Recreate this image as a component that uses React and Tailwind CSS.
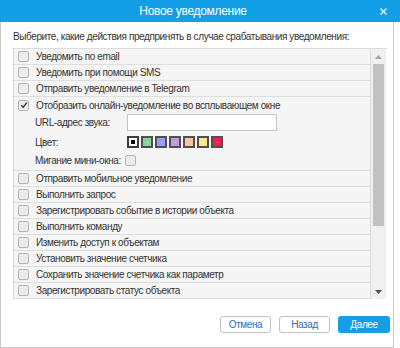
import { X } from 'lucide-react';

const before = [
    'Уведомить по email',
    'Уведомить при помощи SMS',
    'Отправить уведомление в Telegram',
];

const after = [
    'Отправить мобильное уведомление',
    'Выполнить запрос',
    'Зарегистрировать событие в истории объекта',
    'Выполнить команду',
    'Изменить доступ к объектам',
    'Установить значение счетчика',
    'Сохранить значение счетчика как параметр',
    'Зарегистрировать статус объекта',
];

const colors = ['#8fd19e', '#9a9cfb', '#c19bdd', '#ffc39f', '#ffe68f', '#f01f4b'];

function Box({ checked }) {
    return (
        <span className="w-[11px] h-[11px] rounded-[2px] border border-[#b5b5b5] bg-[#ececec] flex items-center justify-center shrink-0">
            {checked && (
                <svg width="8" height="8" viewBox="0 0 8 8">
                    <path d="M1.2 4.2 L3.2 6.2 L6.8 1.6" stroke="#333" strokeWidth="1.4" fill="none" />
                </svg>
            )}
        </span>
    );
}

function Row({ label }) {
    return (
        <div className="h-[16px] flex items-center gap-[7px] pl-[4px] border-b border-[#dedede] bg-[#f5f5f5]">
            <Box />
            <span>{label}</span>
        </div>
    );
}

export default function App() {
    return (
        <div className="w-[400px] h-[348px] bg-white text-[10px] tracking-[-0.4px] text-[#333] overflow-hidden" style={{ fontFamily: '"Liberation Sans", Arial, sans-serif' }}>
            {/* Header */}
            <div className="h-[22px] bg-[#139fe8] text-white flex items-center relative">
                <span className="w-[386px] text-center text-[12px] tracking-[-0.3px]">Новое уведомление</span>
                <X size={11} strokeWidth={2.5} className="absolute left-[378px] top-[6px]" />
            </div>

            <div className="w-[394px] h-[326px] border-l border-r border-b border-[#c9c9c9] flex flex-col">
                <div className="pl-[12px] pt-[9px] h-[26px] leading-[12px] whitespace-nowrap">
                    Выберите, какие действия предпринять в случае срабатывания уведомления:
                </div>

                {/* List */}
                <div className="ml-[12px] w-[374px] h-[251px] flex border-l border-t border-[#dcdcdc]">
                    <div className="w-[357px] border-r border-[#dcdcdc]">
                        {before.map(l => <Row key={l} label={l} />)}

                        <div className="h-[74px] border-b border-[#dedede] bg-[#f5f5f5] flex flex-col">
                            <div className="h-[16px] flex items-center gap-[7px] pl-[4px]">
                                <Box checked />
                                <span>Отобразить онлайн-уведомление во всплывающем окне</span>
                            </div>
                            <div className="h-[18px] flex items-center pl-[21px]">
                                <span className="w-[92px]">URL-адрес звука:</span>
                                <div className="w-[150px] h-[17px] bg-white border border-[#c5c5c5]" />
                            </div>
                            <div className="h-[20px] flex items-center pl-[21px] pt-[2px]">
                                <span className="w-[92px]">Цвет:</span>
                                <div className="flex gap-[2px]">
                                    <span className="w-[12px] h-[12px] border-2 border-[#3d3d3d] bg-white flex items-center justify-center">
                                        <span className="w-[4px] h-[4px] bg-black" />
                                    </span>
                                    {colors.map(c => (
                                        <span key={c} className="w-[12px] h-[12px] border-2 border-[#505050] flex items-center justify-center" style={{ backgroundColor: c }}>
                                            <span className="w-[1px] h-[1px] bg-white/50" />
                                        </span>
                                    ))}
                                </div>
                            </div>
                            <div className="h-[19px] flex items-center pl-[21px]">
                                <span className="mr-[4px]">Мигание мини-окна:</span>
                                <Box />
                            </div>
                        </div>

                        {after.map(l => <Row key={l} label={l} />)}
                    </div>

                    {/* Scrollbar */}
                    <div className="w-[15px] bg-[#f0f0f0] flex flex-col items-center">
                        <div className="h-[15px] flex items-center justify-center">
                            <svg width="7" height="4" viewBox="0 0 7 4"><path d="M3.5 0 L7 4 L0 4Z" fill="#a3a3a3" /></svg>
                        </div>
                        <div className="w-[11px] h-[162px] bg-[#c1c1c1]" />
                        <div className="flex-1" />
                        <div className="h-[15px] flex items-center justify-center">
                            <svg width="7" height="4" viewBox="0 0 7 4"><path d="M0 0 L7 0 L3.5 4Z" fill="#505050" /></svg>
                        </div>
                    </div>
                </div>

                {/* Buttons */}
                <div className="flex justify-end gap-[8px] pr-[3px] pt-[17px]">
                    <button className="w-[51px] h-[17px] rounded-[3px] border border-[#c2c2c2] bg-white text-[#2f6db5] text-[10px] leading-none">Отмена</button>
                    <button className="w-[51px] h-[17px] rounded-[3px] border border-[#c2c2c2] bg-white text-[#2f6db5] text-[10px] leading-none">Назад</button>
                    <button className="w-[52px] h-[17px] rounded-[3px] bg-[#139fe8] text-white text-[10px] leading-none">Далее</button>
                </div>
            </div>
        </div>
    );
}
